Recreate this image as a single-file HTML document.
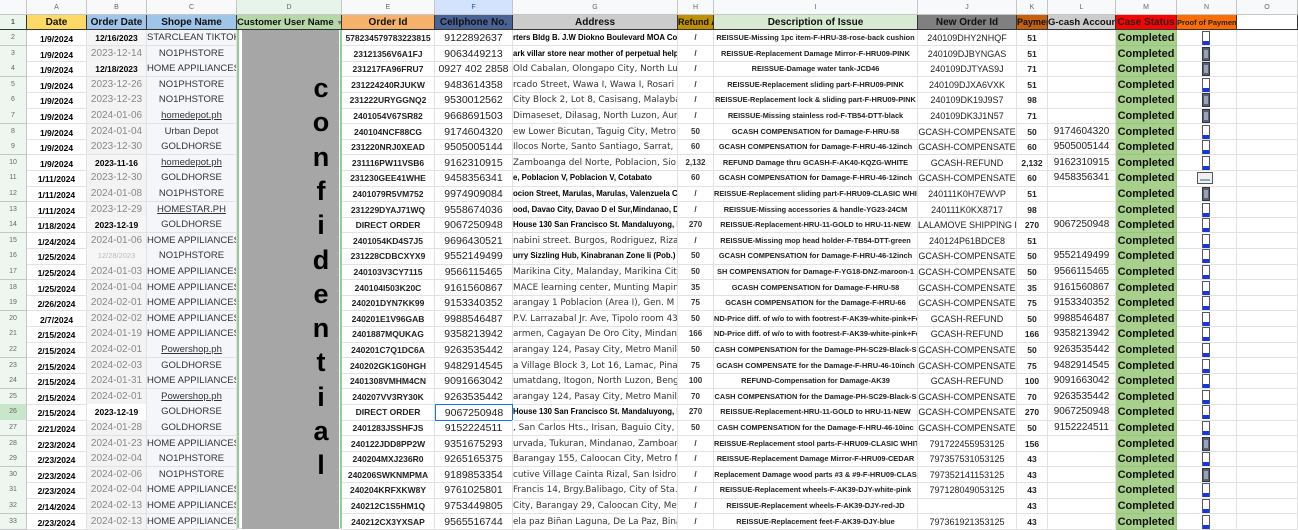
<!DOCTYPE html>
<html><head><meta charset="utf-8">
<style>
*{margin:0;padding:0;box-sizing:border-box}
body{width:1298px;height:529px;overflow:hidden;background:#fff;font-family:"Liberation Sans",Arial,sans-serif;position:relative}
.c{position:absolute;overflow:hidden;white-space:nowrap;text-align:center;border-right:1px solid #e2e2e2;border-bottom:1px solid #e2e2e2;color:#000}
.lt{position:absolute;font-weight:900;font-size:27px;color:#000;font-family:"Liberation Sans",sans-serif;width:30px;text-align:center;left:306px}
</style></head><body>
<div id="g"></div>
<script>
const X=[0,27,87,147,237,342,435,513,678,714,918,1017,1048,1116,1177,1237,1298];
const L=['','A','B','C','D','E','F','G','H','I','J','K','L','M','N','O'];
const RH=15.6,Y0=30;
let h='';
function cell(x,y,w,hh,txt,st){h+=`<div class="c" style="left:${x}px;top:${y}px;width:${w}px;height:${hh}px;line-height:${hh}px;${st||''}">${txt}</div>`;}
for(let i=0;i<16;i++){let bg='#f8f9fa',col='#666';if(i==4)bg='#e6f4ea';if(i==6){bg='#d3e3fd';col='#0b57d0';}
cell(X[i],0,X[i+1]-X[i],15,L[i],`background:${bg};font-size:7px;color:${col};border-color:#c4c7c5`);}
const H=[['1','#eaf5ec','#555','7px',''],['Date','#ffd966'],['Order Date','#9fc5e8'],['Shope Name','#9fc5e8'],['Customer User Name <span style="color:#777;font-size:7px">&#9660;</span>','#b6d7a8','','9.5px'],['Order Id','#f6b26b'],['Cellphone No.','#4a6396'],['Address','#cccccc'],['Refund A','#bf9000','','9px','text-align:left'],['Description of Issue','#d9ead3'],['New Order Id','#808080'],['Paymen','#c5600f','','9px','text-align:left'],['G-cash Account','#cccccc','','9.5px','text-align:left'],['Case Status','#ff0000','#222'],['Proof of Payment','#ff6d01','#222','7.5px','text-align:left'],['','#fff']];
for(let i=0;i<16;i++){const a=H[i];cell(X[i],15,X[i+1]-X[i],15,a[0],`background:${a[1]};font-weight:bold;font-size:${a[3]||'10px'};color:${a[2]||'#111'};border-right:1px solid #333;border-bottom:1px solid #333;${a[4]||''}`);}
const R=[
['1/9/2024','12/16/2023','STARCLEAN TIKTOK','578234579783223815','9122892637','rters Bldg B. J.W Diokno Boulevard MOA Comp','/','REISSUE-Missing 1pc item-F-HRU-38-rose-back cushion','240109DHY2NHQF','51','',0,1],
['1/9/2024','2023-12-14','NO1PHSTORE','23121356V6A1FJ','9063449213','ark villar store near mother of perpetual help, P','/','REISSUE-Replacement Damage Mirror-F-HRU09-PINK','240109DJBYNGAS','51','',0,0],
['1/9/2024','12/18/2023','HOME APPILIANCES','231217FA96FRU7','0927 402 2858','Old Cabalan, Olongapo City, North Lu','/','REISSUE-Damage water tank-JCD46','240109DJTYAS9J','71','',1,0],
['1/9/2024','2023-12-26','NO1PHSTORE','231224240RJUKW','9483614358','rcado Street, Wawa I, Wawa I, Rosari','/','REISSUE-Replacement sliding part-F-HRU09-PINK','240109DJXA6VXK','51','',1,1],
['1/9/2024','2023-12-23','NO1PHSTORE','231222URYGGNQ2','9530012562','City Block 2, Lot 8, Casisang, Malayba','/','REISSUE-Replacement lock &amp; sliding part-F-HRU09-PINK','240109DK19J9S7','98','',1,0],
['1/9/2024','2024-01-06','<u>homedepot.ph</u>','2401054V67SR82','9668691503','Dimaseset, Dilasag, North Luzon, Aur','/','REISSUE-Missing stainless rod-F-TB54-DTT-black','240109DK3J1N57','71','',1,0],
['1/9/2024','2024-01-04','Urban Depot','240104NCF88CG','9174604320','ew Lower Bicutan, Taguig City, Metro M','50','GCASH COMPENSATION for Damage-F-HRU-58','GCASH-COMPENSATE','50','9174604320',1,1],
['1/9/2024','2023-12-30','GOLDHORSE','231220NRJ0XEAD','9505005144','Ilocos Norte, Santo Santiago, Sarrat,','60','GCASH COMPENSATION for Damage-F-HRU-46-12inch','GCASH-COMPENSATE','60','9505005144',1,1],
['1/9/2024','2023-11-16','<u>homedepot.ph</u>','231116PW11VSB6','9162310915','Zamboanga del Norte, Poblacion, Sio','2,132','REFUND Damage thru GCASH-F-AK40-KQZG-WHITE','GCASH-REFUND','2,132','9162310915',1,1],
['1/11/2024','2023-12-30','GOLDHORSE','231230GEE41WHE','9458356341','e, Poblacion V, Poblacion V, Cotabato','60','GCASH COMPENSATION for Damage-F-HRU-46-12inch','GCASH-COMPENSATE','60','9458356341',0,2],
['1/11/2024','2024-01-08','NO1PHSTORE','2401079R5VM752','9974909084','ocion Street, Marulas, Marulas, Valenzuela C','/','REISSUE-Replacement sliding part-F-HRU09-CLASIC WHIT','240111K0H7EWVP','51','',0,0],
['1/11/2024','2023-12-29','<u>HOMESTAR.PH</u>','231229DYAJ71WQ','9558674036','ood, Davao City, Davao D el Sur,Mindanao, Dav','/','REISSUE-Missing accessories &amp; handle-YG23-24CM','240111K0KX8717','98','',0,1],
['1/18/2024','2023-12-19','GOLDHORSE','DIRECT ORDER','9067250948','House 130 San Francisco St. Mandaluyong, Met','270','REISSUE-Replacement-HRU-11-GOLD to HRU-11-NEW','LALAMOVE SHIPPING FEE','270','9067250948',0,1],
['1/24/2024','2024-01-06','HOME APPILIANCES','2401054KD4S7J5','9696430521','nabini street. Burgos, Rodriguez, Rizal','/','REISSUE-Missing mop head holder-F-TB54-DTT-green','240124P61BDCE8','51','',1,1],
['1/25/2024','12/28/2023','NO1PHSTORE','231228CDBCXYX9','9552149499','urry Sizzling Hub, Kinabranan Zone Ii (Pob.)','50','GCASH COMPENSATION for Damage-F-HRU-46-12inch','GCASH-COMPENSATE','50','9552149499',0,1],
['1/25/2024','2024-01-03','HOME APPILIANCES','240103V3CY7115','9566115465','Marikina City, Malanday, Marikina City,','50','SH COMPENSATION for Damage-F-YG18-DNZ-maroon-1','GCASH-COMPENSATE','50','9566115465',1,1],
['1/25/2024','2024-01-04','HOME APPILIANCES','240104I503K20C','9161560867','MACE learning center, Munting Mapino,','35','GCASH COMPENSATION for Damage-F-HRU-58','GCASH-COMPENSATE','35','9161560867',1,1],
['2/26/2024','2024-02-01','HOME APPILIANCES','240201DYN7KK99','9153340352','arangay 1 Poblacion (Area I), Gen. M','75','GCASH COMPENSATION for the Damage-F-HRU-66','GCASH-COMPENSATE','75','9153340352',1,1],
['2/7/2024','2024-02-02','HOME APPILIANCES','240201E1V96GAB','9988546487','P.V. Larrazabal Jr. Ave, Tipolo room 43','50','ND-Price diff. of w/o to with footrest-F-AK39-white-pink+Fo','GCASH-REFUND','50','9988546487',1,1],
['2/15/2024','2024-01-19','HOME APPILIANCES','2401887MQUKAG','9358213942','armen, Cagayan De Oro City, Mindana','166','ND-Price diff. of w/o to with footrest-F-AK39-white-pink+Fo','GCASH-REFUND','166','9358213942',1,1],
['2/15/2024','2024-02-01','<u>Powershop.ph</u>','240201C7Q1DC6A','9263535442','arangay 124, Pasay City, Metro Manila','50','CASH COMPENSATION for the Damage-PH-SC29-Black-S','GCASH-COMPENSATE','50','9263535442',1,1],
['2/15/2024','2024-02-03','GOLDHORSE','240202GK1G0HGH','9482914545','a Village Block 3, Lot 16, Lamac, Pina','75','GCASH COMPENSATE for the Damage-F-HRU-46-10inch','GCASH-COMPENSATE','75','9482914545',1,1],
['2/15/2024','2024-01-31','HOME APPILIANCES','2401308VMHM4CN','9091663042','umatdang, Itogon, North Luzon, Beng','100','REFUND-Compensation for Damage-AK39','GCASH-REFUND','100','9091663042',1,1],
['2/15/2024','2024-02-01','<u>Powershop.ph</u>','240207VV3RY30K','9263535442','arangay 124, Pasay City, Metro Manila','70','CASH COMPENSATION for the Damage-PH-SC29-Black-S','GCASH-COMPENSATE','70','9263535442',1,1],
['2/15/2024','2023-12-19','GOLDHORSE','DIRECT ORDER','9067250948','House 130 San Francisco St. Mandaluyong, Met','270','REISSUE-Replacement-HRU-11-GOLD to HRU-11-NEW','GCASH-COMPENSATE','270','9067250948',0,1],
['2/21/2024','2024-01-28','GOLDHORSE','2401283JSSHFJS','9152224511',', San Carlos Hts., Irisan, Baguio City,','50','CASH COMPENSATION for the Damage-F-HRU-46-10inc','GCASH-COMPENSATE','50','9152224511',1,1],
['2/23/2024','2024-01-23','HOME APPILIANCES','240122JDD8PP2W','9351675293','urvada, Tukuran, Mindanao, Zamboang','/','REISSUE-Replacement stool parts-F-HRU09-CLASIC WHIT','791722455953125','156','',1,0],
['2/23/2024','2024-02-04','NO1PHSTORE','240204MXJ236R0','9265165375','Barangay 155, Caloocan City, Metro M','/','REISSUE-Replacement Damage Mirror-F-HRU09-CEDAR','797357531053125','43','',1,1],
['2/23/2024','2024-02-06','NO1PHSTORE','240206SWKNMPMA','9189853354','cutive Village Cainta Rizal, San Isidro,','/','Replacement Damage wood parts #3 &amp; #9-F-HRU09-CLAS','797352141153125','43','',1,0],
['2/23/2024','2024-02-04','HOME APPILIANCES','240204KRFXKW8Y','9761025801','Francis 14, Brgy.Balibago, City of Sta.R','/','REISSUE-Replacement wheels-F-AK39-DJY-white-pink','797128049053125','43','',1,1],
['2/14/2024','2024-02-13','HOME APPILIANCES','240212C1S5HM1Q','9753449805','City, Barangay 29, Caloocan City, Met','/','REISSUE-Replacement wheels-F-AK39-DJY-red-JD','','43','',1,1],
['2/23/2024','2024-02-13','HOME APPILIANCES','240212CX3YXSAP','9565516744','ela paz Biñan Laguna, De La Paz, Bina','/','REISSUE-Replacement feet-F-AK39-DJY-blue','797361921353125','43','',1,1]];
const black=[0,2,8,12,24];
R.forEach((r,k)=>{
 const y=Y0+k*RH, rn=k+2, hh=RH+0.6;
 const sel=rn==26;
 cell(X[0],y,27,hh,rn,`background:${sel?'#c8e6c9':'#eef7ef'};font-size:7px;color:#666;border-color:#c4c7c5`);
 cell(X[1],y,60,hh,r[0],'font-weight:bold;font-size:8.5px;padding-top:1px');
 const bb=black.includes(k);
 cell(X[2],y,60,hh,r[1],bb?`font-weight:bold;font-size:8.5px;${k==24?'background:#fff':'background:#f6f6f6'}`:(k==14?'font-size:7.5px;color:#bbb;background:#f6f6f6':'font-size:10px;color:#888;background:#f3f3f3'));
 cell(X[3],y,90,hh,r[2],'font-size:9.5px;color:#333;background:#f4f6fa');
 cell(X[5],y,93,hh,r[3],'font-weight:bold;font-size:8.5px;color:#222');
 cell(X[6],y,78,hh,r[4],`font-size:10.5px;color:#222;${sel?'border:1px solid #1a73e8;':''}`);
 cell(X[7],y,165,hh,r[5],(r[11]?"font-family:'DejaVu Sans',sans-serif;font-size:8.8px;color:#333;":'font-weight:bold;font-size:7.8px;')+'text-align:left');
 cell(X[8],y,36,hh,r[6],'font-weight:bold;font-size:8px;color:#333');
 cell(X[9],y,204,hh,r[7],'font-weight:bold;font-size:7.4px;color:#222');
 cell(X[10],y,99,hh,r[8],'font-size:9px;color:#222');
 cell(X[11],y,31,hh,r[9],'font-weight:bold;font-size:8.5px;color:#222');
 cell(X[12],y,68,hh,r[10],'font-size:10px;color:#222');
 cell(X[13],y,61,hh,'Completed','background:#a8d08d;font-weight:bold;font-size:11px;color:#111;border-color:#9bc480');
 let ic='';
 if(r[12]==2) ic='<div style="position:absolute;left:20px;top:2px;width:16px;height:12px;border:1px solid #555;background:#f0f0f0"><div style="margin:6px 2px 0;height:2px;background:#8ab"></div></div>';
 else if(r[12]==1) ic='<div style="position:absolute;left:25px;top:1px;width:8px;height:14px;border:1px solid #556;background:#fff"><div style="margin-top:9px;height:4px;background:#1437e0"></div></div>';
 else ic='<div style="position:absolute;left:25px;top:1px;width:8px;height:14px;background:#5a6170;border:1px solid #334"><div style="margin:2px 1px;height:8px;background:#9aa3b5"></div></div>';
 cell(X[14],y,60,hh,ic,'');
 cell(X[15],y,61,hh,'','');
});
h+=`<div class="c" style="left:237px;top:30px;width:105px;height:499px;background:#fff;border-left:2px solid #8fcf9a;border-right:2px solid #8fcf9a"></div>`;
h+=`<div style="position:absolute;left:242px;top:30px;width:97px;height:499px;background:#a6a6a6"></div>`;
'confidential'.split('').forEach((ch,i)=>{h+=`<div class="lt" style="top:${91+i*34.3-18}px">${ch}</div>`;});
document.getElementById('g').innerHTML=h;
</script>
</body></html>
